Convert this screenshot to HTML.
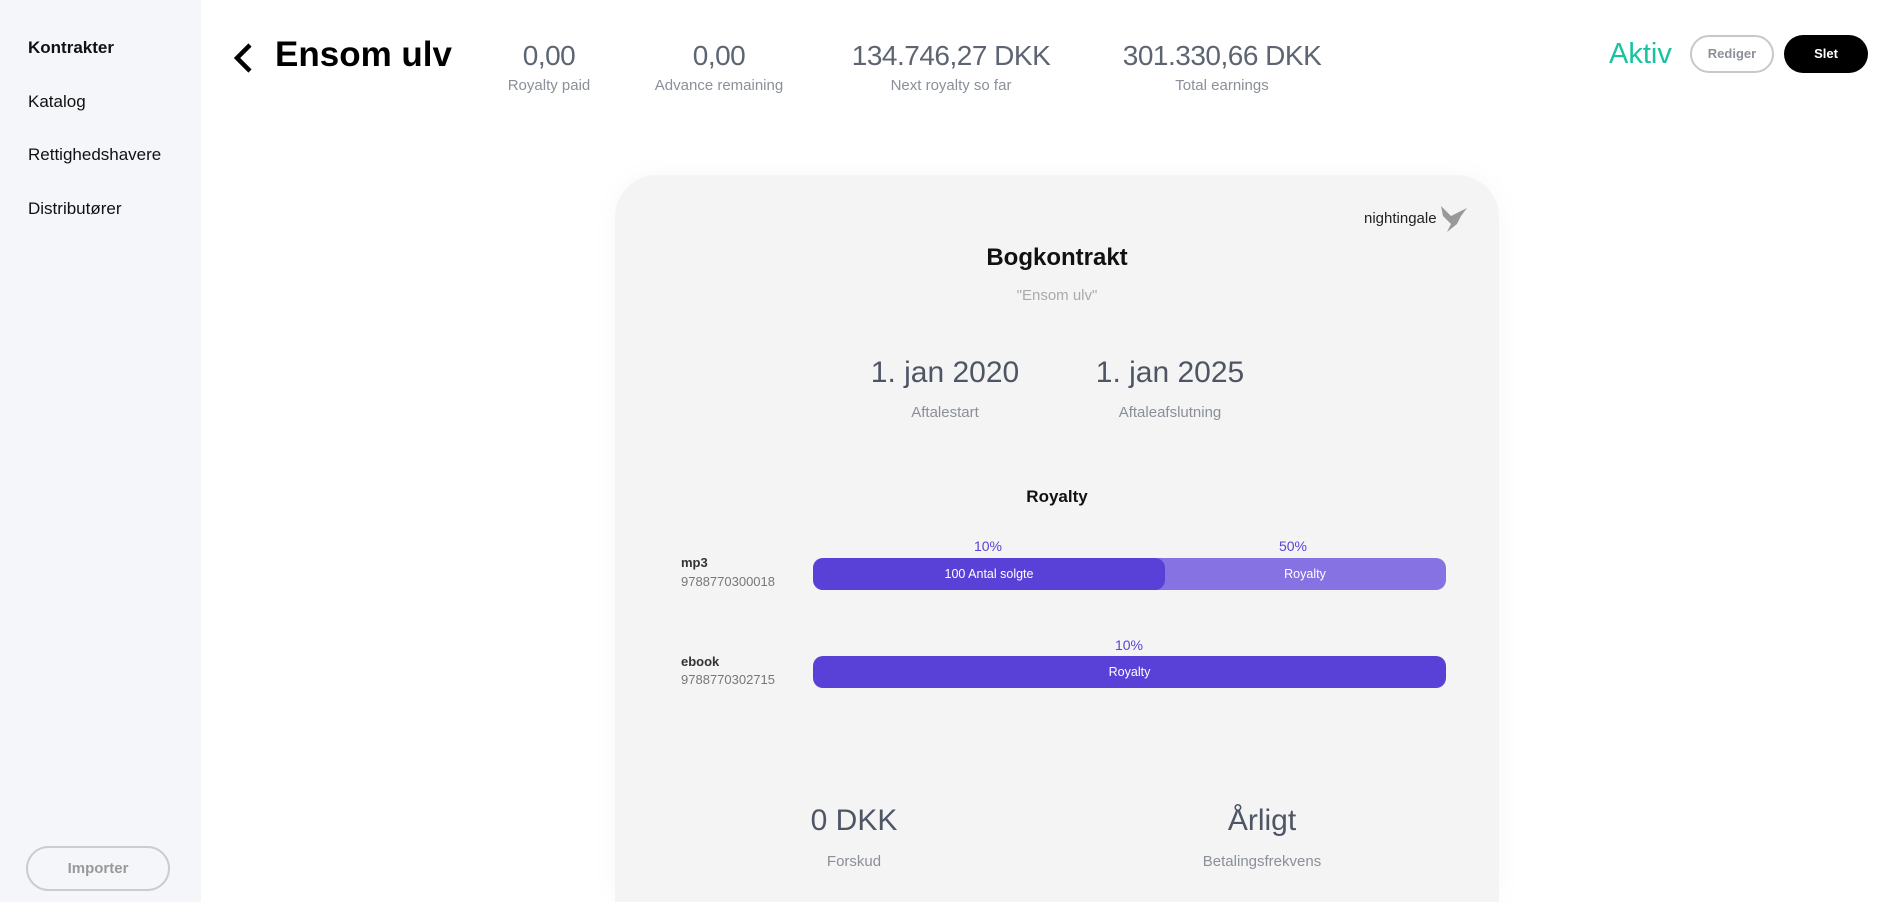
<!DOCTYPE html>
<html><head><meta charset="utf-8"><style>
*{margin:0;padding:0;box-sizing:border-box}
html,body{width:1888px;height:902px;overflow:hidden}
body{background:#fff;font-family:"Liberation Sans",sans-serif;position:relative}
.a{position:absolute;white-space:nowrap}
.c{position:absolute;text-align:center;white-space:nowrap;transform:translateX(-50%)}
.side{position:absolute;left:0;top:0;width:201px;height:902px;background:#f5f6fa}
.nav{position:absolute;left:28px;font-size:17px;color:#111}
.num{font-size:28px;font-weight:300;color:#5d6573;letter-spacing:-0.5px}
.lbl{font-size:15px;color:#8a8f99}
.card{position:absolute;left:615px;top:175px;width:884px;height:727px;background:#f4f4f4;border-radius:42px 42px 0 0;box-shadow:0 0 30px rgba(0,0,0,0.03)}
.big{font-size:30px;font-weight:300;color:#4e5666}
.pct{font-size:14px;color:#5a41d8}
.bar{position:absolute;height:32px;border-radius:10px;color:#fff;font-size:12.5px;line-height:32px;text-align:center}
</style></head><body>
<div class="side"></div>
<div class="nav" style="top:38px;font-weight:bold">Kontrakter</div>
<div class="nav" style="top:92px">Katalog</div>
<div class="nav" style="top:145px">Rettighedshavere</div>
<div class="nav" style="top:199px">Distributører</div>
<div class="a" style="left:26px;top:846px;width:144px;height:45px;border:2px solid #ccc;border-radius:23px;text-align:center;line-height:41px;font-size:15px;font-weight:bold;color:#999">Importer</div>

<svg class="a" style="left:230px;top:42px" width="26" height="32" viewBox="0 0 26 32"><path d="M20 3 L7 16 L20 29" fill="none" stroke="#000" stroke-width="4.5"/></svg>
<div class="a" style="left:275px;top:35px;font-size:35px;font-weight:bold;color:#000">Ensom ulv</div>

<div class="c num" style="left:549px;top:40px">0,00</div><div class="c lbl" style="left:549px;top:77px">Royalty paid</div>
<div class="c num" style="left:719px;top:40px">0,00</div><div class="c lbl" style="left:719px;top:77px">Advance remaining</div>
<div class="c num" style="left:951px;top:40px">134.746,27 DKK</div><div class="c lbl" style="left:951px;top:77px">Next royalty so far</div>
<div class="c num" style="left:1222px;top:40px">301.330,66 DKK</div><div class="c lbl" style="left:1222px;top:77px">Total earnings</div>

<div class="a" style="left:1609px;top:38px;font-size:29px;color:#17c3a0;font-weight:300">Aktiv</div>
<div class="a" style="left:1690px;top:35px;width:84px;height:38px;border:2px solid #c8c8c8;border-radius:19px;text-align:center;line-height:34px;font-size:13px;font-weight:bold;color:#8a8f99">Rediger</div>
<div class="a" style="left:1784px;top:35px;width:84px;height:38px;background:#000;border-radius:19px;text-align:center;line-height:38px;font-size:13px;font-weight:bold;color:#fff">Slet</div>

<div class="card"></div>
<div class="a" style="left:1364px;top:210px;font-size:15px;color:#222">nightingale</div>
<svg class="a" style="left:1439px;top:204px" width="30" height="30" viewBox="0 0 30 30"><path d="M2 2 L12 12 L20 8 L28 4 L22 12 L18 20 L8 28 L12 20 L4 12 Z" fill="#999"/></svg>

<div class="c" style="left:1057px;top:244px;font-size:24px;font-weight:bold;color:#111">Bogkontrakt</div>
<div class="c" style="left:1057px;top:287px;font-size:15px;color:#aaa">"Ensom ulv"</div>

<div class="c big" style="left:945px;top:356px">1. jan 2020</div>
<div class="c lbl" style="left:945px;top:404px">Aftalestart</div>
<div class="c big" style="left:1170px;top:356px">1. jan 2025</div>
<div class="c lbl" style="left:1170px;top:404px">Aftaleafslutning</div>

<div class="c" style="left:1057px;top:487px;font-size:17px;font-weight:bold;color:#111">Royalty</div>

<div class="a" style="left:681px;top:555px;font-size:13px;font-weight:bold;color:#333">mp3</div>
<div class="a" style="left:681px;top:574px;font-size:13px;color:#777">9788770300018</div>
<div class="c pct" style="left:988px;top:538px">10%</div>
<div class="c pct" style="left:1293px;top:538px">50%</div>
<div class="bar" style="left:813px;top:558px;width:633px;background:#8672e2"></div>
<div class="bar" style="left:1164px;top:558px;width:282px;background:transparent">Royalty</div>
<div class="bar" style="left:813px;top:558px;width:352px;background:#5941d8">100 Antal solgte</div>

<div class="a" style="left:681px;top:654px;font-size:13px;font-weight:bold;color:#333">ebook</div>
<div class="a" style="left:681px;top:672px;font-size:13px;color:#777">9788770302715</div>
<div class="c pct" style="left:1129px;top:637px">10%</div>
<div class="bar" style="left:813px;top:656px;width:633px;background:#5941d8">Royalty</div>

<div class="c big" style="left:854px;top:804px">0 DKK</div>
<div class="c lbl" style="left:854px;top:853px">Forskud</div>
<div class="c big" style="left:1262px;top:804px">Årligt</div>
<div class="c lbl" style="left:1262px;top:853px">Betalingsfrekvens</div>
</body></html>
